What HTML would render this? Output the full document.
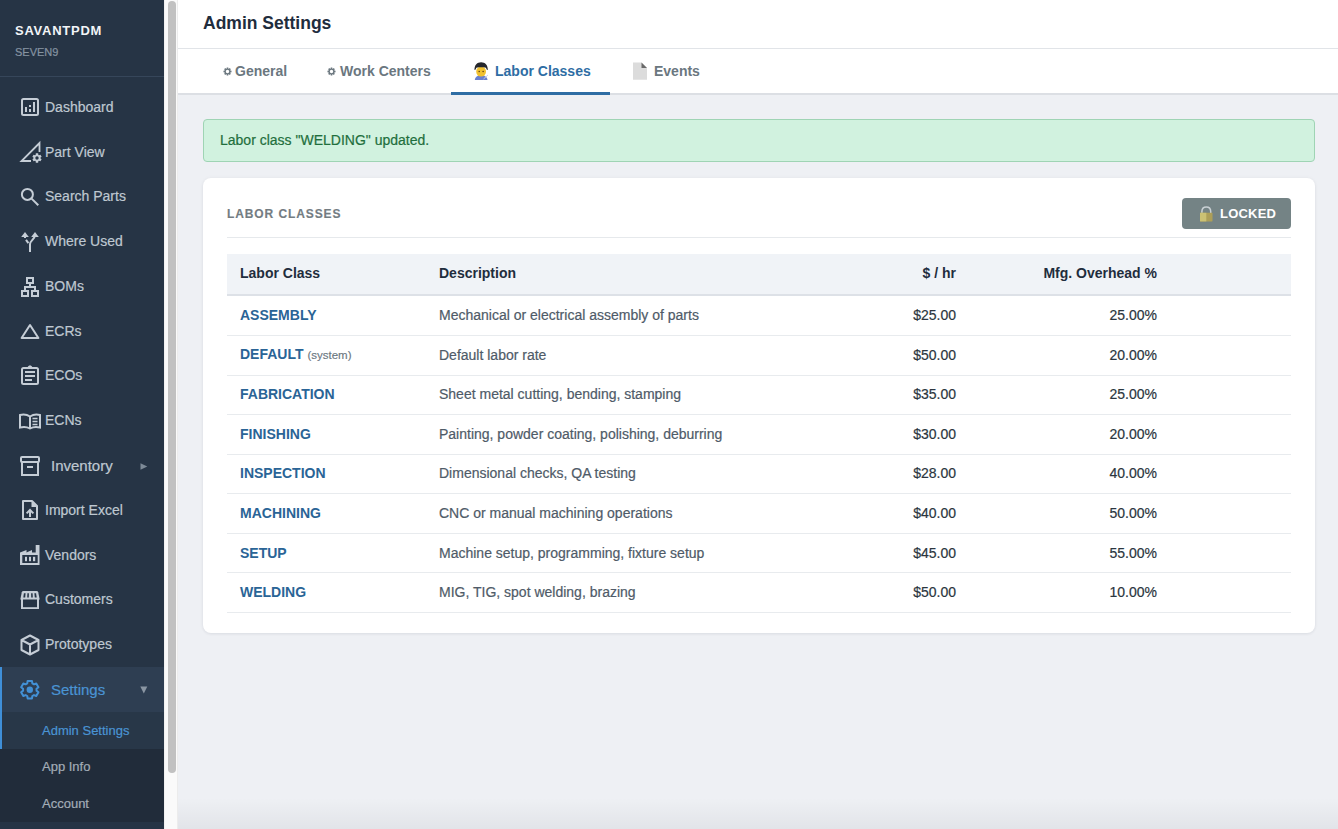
<!DOCTYPE html>
<html><head><meta charset="utf-8">
<style>
*{box-sizing:border-box;margin:0;padding:0}
html,body{width:1338px;height:829px;overflow:hidden;font-family:"Liberation Sans",sans-serif;background:#eef0f4}
.t{position:absolute;white-space:nowrap}
#sb{position:absolute;left:0;top:0;width:164px;height:829px;background:#263445;color:#c8d0d8;overflow:hidden}
#brand{left:15px;top:23px;font-weight:bold;font-size:13px;line-height:15px;color:#f2f4f7;letter-spacing:0.75px}
#org{left:15px;top:46px;font-size:11px;line-height:12px;color:#8593a1}
#sbline{position:absolute;left:0;top:76px;width:164px;height:1px;background:#36465a}
.nl{left:45px;font-size:14px;line-height:16px;color:#bfc8d1}
.gl{left:51px;font-size:15px;line-height:17px;color:#bfc8d1}
#setrow{position:absolute;left:0;top:667px;width:164px;height:45px;background:#2e3e52}
#admrow{position:absolute;left:0;top:712px;width:164px;height:37px;background:#283748}
#subdark{position:absolute;left:0;top:749px;width:164px;height:73px;background:#212c3a}
#actbar{position:absolute;left:0;top:667px;width:2px;height:82px;background:#3f8fd8}
.sl{left:42px;font-size:13px;line-height:15px;color:#a3adb7}
#sbsvg{position:absolute;left:0;top:0}
#gut{position:absolute;left:164px;top:0;width:14px;height:829px;background:#fafafa;border-left:1px solid #f0f0f0;border-right:1px solid #ececec}
#thumb{position:absolute;left:168px;top:1px;width:8px;height:772px;background:#c1c1c1;border-radius:4px}
#main{position:absolute;left:178px;top:0;width:1160px;height:829px;background:#eef0f4}
#hdr{position:absolute;left:0;top:0;width:1160px;height:49px;background:#fff;border-bottom:1px solid #e1e4e8}
#h1{left:25px;top:13px;font-size:17.5px;line-height:20px;font-weight:bold;color:#1f2d3d}
#tabs{position:absolute;left:0;top:49px;width:1160px;height:46px;background:#fff;border-bottom:2px solid #dcdfe4}
.tab{top:14px;font-size:14px;line-height:16px;font-weight:bold;color:#6b777f}
.tab.act{color:#2e6da4}
#uline{position:absolute;left:273px;top:43px;width:159px;height:3px;background:#2e6da4}
#alert{position:absolute;left:25px;top:119px;width:1112px;height:43px;background:#d1f2df;border:1px solid #9fd4b4;border-radius:4px}
#alert .t{left:16px;top:12px;font-size:14px;line-height:16px;color:#1f6f3d}
#card{position:absolute;left:25px;top:178px;width:1112px;height:455px;background:#fff;border-radius:8px;box-shadow:0 1px 3px rgba(20,30,50,0.07),0 0 5px rgba(20,30,50,0.03)}
#ctitle{left:24px;top:29px;font-size:12px;line-height:14px;font-weight:bold;color:#737c82;letter-spacing:0.9px;-webkit-text-stroke:0.15px currentColor}
#lock{position:absolute;left:979px;top:20px;width:109px;height:31px;background:#748385;border-radius:4px}
#lock .t{left:38px;top:8px;color:#fff;font-weight:bold;font-size:13px;line-height:15px;letter-spacing:0.2px}
#cline{position:absolute;left:24px;top:59px;width:1064px;height:1px;background:#e6e9ec}
table{position:absolute;left:24px;top:76px;width:1064px;border-collapse:collapse;table-layout:fixed}
th{height:40.5px;background:#f0f3f7;border-bottom:2px solid #dde1e7;font-size:14px;line-height:16px;color:#1f2d3d;text-align:left;font-weight:bold;padding:0 13px 2px}
td{height:39.57px;border-bottom:1px solid #e8ebee;font-size:14px;line-height:16px;color:#4f5b68;padding:0 13px 1px}
tr:nth-child(2) td{height:41px}
td.n{color:#2a6496;font-weight:bold}
td.v{color:#2b3640}
.r{text-align:right!important}
.sys{font-size:11.5px;color:#6b777f;font-weight:normal}
#bshade{position:absolute;left:178px;top:798px;width:1160px;height:31px;background:linear-gradient(rgba(0,0,20,0),rgba(0,0,20,0.05))}
.nl,.gl,.sl,td,#alert .t,#org{-webkit-text-stroke:0.2px currentColor}
td.n{-webkit-text-stroke:0}
.sys{-webkit-text-stroke:0.15px currentColor}
</style></head><body>
<div id="sb">
  <div id="setrow"></div>
  <div id="admrow"></div>
  <div id="subdark"></div>
  <div id="actbar"></div>
  <div id="brand" class="t">SAVANTPDM</div>
  <div id="org" class="t">SEVEN9</div>
  <div id="sbline"></div>
  <div class="t nl" style="top:99px">Dashboard</div>
  <div class="t nl" style="top:144px">Part View</div>
  <div class="t nl" style="top:188px">Search Parts</div>
  <div class="t nl" style="top:233px">Where Used</div>
  <div class="t nl" style="top:278px">BOMs</div>
  <div class="t nl" style="top:323px">ECRs</div>
  <div class="t nl" style="top:367px">ECOs</div>
  <div class="t nl" style="top:412px">ECNs</div>
  <div class="t gl" style="top:457px">Inventory</div>
  <div class="t nl" style="top:502px">Import Excel</div>
  <div class="t nl" style="top:547px">Vendors</div>
  <div class="t nl" style="top:591px">Customers</div>
  <div class="t nl" style="top:636px">Prototypes</div>
  <div class="t gl" style="top:681px;color:#4a94d4">Settings</div>
  <div class="t sl" style="top:723px;color:#4a94d4">Admin Settings</div>
  <div class="t sl" style="top:759px">App Info</div>
  <div class="t sl" style="top:796px">Account</div>
  <svg id="sbsvg" width="164" height="829" viewBox="0 0 164 829">
    <g fill="none" stroke="#c5cdd6" stroke-width="2">
      <!-- dashboard -->
      <rect x="22" y="99" width="16" height="16" rx="1.5"/>
      <!-- part view -->
      <path d="M31 161H21.5L39.5 143V152" stroke-width="1.8"/>
      <!-- search -->
      <circle cx="27.4" cy="194.4" r="5.5"/>
      <path d="M31.6 198.6L38.3 205.3"/>
      <!-- where used -->
      <path d="M30 252V244C30 241 35 239 35 235"/>
      <path d="M25 236.5V238M26 239.8L28.4 243.2"/>
      <!-- boms -->
      <rect x="27" y="278" width="6" height="5"/>
      <path d="M30 284V287M25 290V287H35V290"/>
      <rect x="22" y="291" width="6" height="5"/>
      <rect x="32" y="291" width="6" height="5"/>
      <!-- ecrs -->
      <path d="M30 325L21.6 338H38.4Z" stroke-linejoin="round"/>
      <!-- ecos -->
      <rect x="22" y="368" width="16" height="16" rx="1.5"/>
      <path d="M28 368.2Q30 364.2 32 368.2"/>
      <!-- ecns -->
      <path d="M30 416.5C27 414.5 23 414.2 20 415V427.5C23 426.6 27 426.8 30 428.5C33 426.8 37 426.6 40 427.5V415C37 414.2 33 414.5 30 416.5V428"/>
      <path d="M32.5 418.5H37.5M32.5 421.5H37.5M32.5 424.5H37.5" stroke-width="1.5"/>
      <!-- inventory -->
      <rect x="21" y="457" width="18" height="5" rx="1"/>
      <path d="M22 462V475H38V462M27 467H33"/>
      <!-- import -->
      <path d="M23 501H32L37 506V519H23Z" stroke-linejoin="round"/>
      <path d="M30 517V510.5M26.6 513.4L30 510L33.4 513.4"/>
      <!-- customers -->
      <path d="M22 599V608H38V599"/>
      <!-- prototypes -->
      <path d="M30 635.5L38.5 640V650L30 654.5L21.5 650V640ZM21.5 640L30 644.5L38.5 640M30 644.5V654.5" stroke-linejoin="round"/>
    </g>
    <g fill="#c5cdd6">
      <rect x="25" y="107" width="2" height="5"/>
      <path d="M21.2 237L25 232L28.8 237Z"/>
      <path d="M31.2 237L35 232L38.8 237Z"/>
      <rect x="29" y="105" width="2" height="2"/>
      <rect x="29" y="109" width="2" height="3"/>
      <rect x="33" y="102" width="2" height="10"/>
      <path fill-rule="evenodd" d="M38.38,154.89 L38.16,153.34 L35.84,153.34 L35.62,154.89 L35.00,155.25 L33.55,154.67 L32.39,156.68 L33.62,157.64 L33.62,158.36 L32.39,159.32 L33.55,161.33 L35.00,160.75 L35.62,161.11 L35.84,162.66 L38.16,162.66 L38.38,161.11 L39.00,160.75 L40.45,161.33 L41.61,159.32 L40.38,158.36 L40.38,157.64 L41.61,156.68 L40.45,154.67 L39.00,155.25 Z M37 156.3A1.7 1.7 0 1 0 37 159.7A1.7 1.7 0 1 0 37 156.3Z"/>
      <rect x="25" y="371" width="10" height="2"/>
      <rect x="25" y="375" width="10" height="2"/>
      <rect x="25" y="379" width="7" height="2"/>
      <path d="M31.5 501V507H37.2Z"/>
      <path fill-rule="evenodd" d="M20 565V552.6L26.5 550V552.6L32 550V552.6H35.7V545H39.5V565ZM22.3 555H37.7V563H22.3Z"/>
      <rect x="25" y="556.8" width="2" height="4.4"/>
      <rect x="29" y="556.8" width="2" height="4.4"/>
      <rect x="33" y="556.8" width="2.2" height="4.4"/>
      <path d="M20.3 599.5L21.8 592.2Q22.2 591 23.4 591H36.6Q37.8 591 38.2 592.2L39.7 599.5Z"/>
    </g>
    <g fill="#263445">
      <path d="M23.9 593.3H25.6L25.2 597.6H23.3Z"/>
      <path d="M27.4 593.3H28.9L28.8 597.6H27.2Z"/>
      <path d="M31.1 593.3H32.6L32.8 597.6H31.2Z"/>
      <path d="M34.4 593.3H36.1L36.7 597.6H34.8Z"/>
      <rect x="23" y="600.2" width="14" height="7"/>
    </g>
    <!-- settings gear -->
    <path d="M32.35,683.40 L31.98,680.97 L27.62,680.97 L27.25,683.40 L25.61,684.34 L23.33,683.45 L21.15,687.22 L23.07,688.75 L23.07,690.65 L21.15,692.18 L23.33,695.95 L25.61,695.06 L27.25,696.00 L27.62,698.43 L31.98,698.43 L32.35,696.00 L33.99,695.06 L36.27,695.95 L38.45,692.18 L36.53,690.65 L36.53,688.75 L38.45,687.22 L36.27,683.45 L33.99,684.34 Z" fill="none" stroke="#4290d6" stroke-width="2" stroke-linejoin="round"/>
    <circle cx="29.8" cy="689.7" r="3.2" fill="#4290d6"/>
    <path d="M140.5 463.3V469.7L147.3 466.5Z" fill="#7d8a97"/>
    <path d="M140.3 686.6H147.3L143.8 693.6Z" fill="#8a96a3"/>
  </svg>
</div>
<div id="gut"></div>
<div id="thumb"></div>
<div id="main">
  <div id="hdr"><div id="h1" class="t">Admin Settings</div></div>
  <div id="tabs">
    <svg style="position:absolute;left:45px;top:18px" width="9" height="9" viewBox="0 0 9 9"><path fill-rule="evenodd" fill="#6b777f" d="M5.38,1.63 L5.28,0.48 L3.72,0.48 L3.62,1.63 L3.09,1.85 L2.21,1.10 L1.10,2.21 L1.85,3.09 L1.63,3.62 L0.48,3.72 L0.48,5.28 L1.63,5.38 L1.85,5.91 L1.10,6.79 L2.21,7.90 L3.09,7.15 L3.62,7.37 L3.72,8.52 L5.28,8.52 L5.38,7.37 L5.91,7.15 L6.79,7.90 L7.90,6.79 L7.15,5.91 L7.37,5.38 L8.52,5.28 L8.52,3.72 L7.37,3.62 L7.15,3.09 L7.90,2.21 L6.79,1.10 L5.91,1.85 Z M4.5 2.8A1.7 1.7 0 1 0 4.5 6.2A1.7 1.7 0 1 0 4.5 2.8Z"/></svg>
    <div class="t tab" style="left:57px">General</div>
    <svg style="position:absolute;left:149px;top:18px" width="9" height="9" viewBox="0 0 9 9"><path fill-rule="evenodd" fill="#6b777f" d="M5.38,1.63 L5.28,0.48 L3.72,0.48 L3.62,1.63 L3.09,1.85 L2.21,1.10 L1.10,2.21 L1.85,3.09 L1.63,3.62 L0.48,3.72 L0.48,5.28 L1.63,5.38 L1.85,5.91 L1.10,6.79 L2.21,7.90 L3.09,7.15 L3.62,7.37 L3.72,8.52 L5.28,8.52 L5.38,7.37 L5.91,7.15 L6.79,7.90 L7.90,6.79 L7.15,5.91 L7.37,5.38 L8.52,5.28 L8.52,3.72 L7.37,3.62 L7.15,3.09 L7.90,2.21 L6.79,1.10 L5.91,1.85 Z M4.5 2.8A1.7 1.7 0 1 0 4.5 6.2A1.7 1.7 0 1 0 4.5 2.8Z"/></svg>
    <div class="t tab" style="left:162px">Work Centers</div>
    <svg style="position:absolute;left:296px;top:13px" width="16" height="18" viewBox="0 0 16 18">
      <path d="M0.8 18C1 14.8 3.5 13.4 7.1 13.4C10.7 13.4 13.3 14.8 13.5 18Z" fill="#6a80cf"/>
      <ellipse cx="7.1" cy="9.6" rx="4.9" ry="5" fill="#f2c230"/>
      <path d="M0.5 8C0.3 3 3.3 0.3 7.1 0.3C10.9 0.3 14 3 13.8 8C13 8.5 12.3 7 12 5.8C9 5.2 5.2 5.2 2.3 5.8C2 7 1.3 8.5 0.5 8Z" fill="#25272c"/>
      <circle cx="5.2" cy="9.6" r="0.75" fill="#5b3a12"/>
      <circle cx="9.1" cy="9.6" r="0.75" fill="#5b3a12"/>
      <path d="M9.5 17L13.8 13.2" stroke="#c4cde0" stroke-width="1"/>
    </svg>
    <div class="t tab act" style="left:317px">Labor Classes</div>
    <svg style="position:absolute;left:454px;top:13px" width="16" height="18" viewBox="0 0 16 18">
      <path d="M1 0.5H9.5L15 6V17.8H1Z" fill="#dcdcdc"/>
      <path d="M9.5 0.5L15 6H9.5Z" fill="#6a6a6a"/>
    </svg>
    <div class="t tab" style="left:476px">Events</div>
    <div id="uline"></div>
  </div>
  <div id="alert"><div class="t">Labor class "WELDING" updated.</div></div>
  <div id="card">
    <div id="ctitle" class="t">LABOR CLASSES</div>
    <div id="lock">
      <svg style="position:absolute;left:17px;top:7px" width="14" height="17" viewBox="0 0 14 17">
        <path d="M2.9 8.2V6.6C2.9 3.6 4.8 1.9 7.3 1.9C9.8 1.9 11.7 3.6 11.7 6.6V8.2" fill="none" stroke="#c9d0d4" stroke-width="1.5"/>
        <rect x="1" y="7.8" width="12.5" height="8.6" rx="0.6" fill="#ad9f58"/>
        <rect x="1" y="7.8" width="6.3" height="8.6" fill="#cbc173"/>
      </svg>
      <div class="t">LOCKED</div>
    </div>
    <div id="cline"></div>
    <table>
      <colgroup><col style="width:199px"><col style="width:393px"><col style="width:150px"><col style="width:201px"><col style="width:121px"></colgroup>
      <tr><th>Labor Class</th><th>Description</th><th class="r">$ / hr</th><th class="r">Mfg. Overhead %</th><th></th></tr>
      <tr><td class="n">ASSEMBLY</td><td>Mechanical or electrical assembly of parts</td><td class="r v">$25.00</td><td class="r v">25.00%</td><td></td></tr>
      <tr><td class="n">DEFAULT <span class="sys">(system)</span></td><td>Default labor rate</td><td class="r v">$50.00</td><td class="r v">20.00%</td><td></td></tr>
      <tr><td class="n">FABRICATION</td><td>Sheet metal cutting, bending, stamping</td><td class="r v">$35.00</td><td class="r v">25.00%</td><td></td></tr>
      <tr><td class="n">FINISHING</td><td>Painting, powder coating, polishing, deburring</td><td class="r v">$30.00</td><td class="r v">20.00%</td><td></td></tr>
      <tr><td class="n">INSPECTION</td><td>Dimensional checks, QA testing</td><td class="r v">$28.00</td><td class="r v">40.00%</td><td></td></tr>
      <tr><td class="n">MACHINING</td><td>CNC or manual machining operations</td><td class="r v">$40.00</td><td class="r v">50.00%</td><td></td></tr>
      <tr><td class="n">SETUP</td><td>Machine setup, programming, fixture setup</td><td class="r v">$45.00</td><td class="r v">55.00%</td><td></td></tr>
      <tr><td class="n">WELDING</td><td>MIG, TIG, spot welding, brazing</td><td class="r v">$50.00</td><td class="r v">10.00%</td><td></td></tr>
    </table>
  </div>
</div>
<div id="bshade"></div>
</body></html>
